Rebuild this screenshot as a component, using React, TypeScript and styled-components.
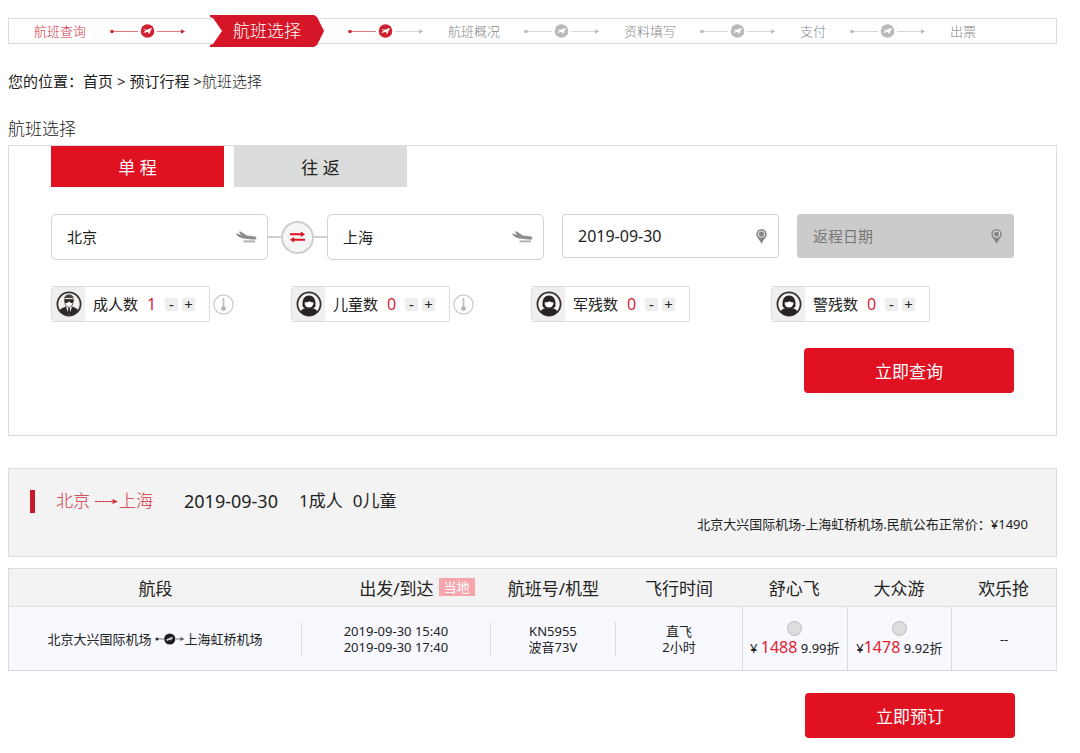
import React, { useState } from "react";
import styled, { createGlobalStyle, css } from "styled-components";

const RED = "#e01222";
const LINE = "#dcdcdc";

const GlobalStyle = createGlobalStyle`
  *, *::before, *::after { box-sizing: border-box; }
  body {
    margin: 0;
    background: #fff;
    color: #222;
    font-family: "Noto Sans", "Noto Sans CJK SC", sans-serif;
    font-size: 15px;
    line-height: 20px;
  }
  button, input { font: inherit; color: inherit; }
  button { cursor: pointer; }
`;

const Page = styled.main`
  padding: 18px 23px 15px 8px;
`;

/* progress bar */

const Steps = styled.ol`
  display: flex;
  align-items: center;
  height: 26px;
  margin: 0;
  padding: 0 0 0 25px;
  border: 1px solid ${LINE};
  list-style: none;
  font-size: 13px;
  font-weight: 300;
  white-space: nowrap;
`;

const Step = styled.li<{ $done?: boolean }>`
  display: flex;
  align-items: center;
  color: ${(p) => (p.$done ? "#d0313f" : "#858585")};
`;

const StepCurrent = styled.span`
  display: grid;
  width: 114px;
  height: 32px;
  align-items: center;
  justify-items: center;
  color: #fff;
  font-size: 17px;
  background: #d51528;
  clip-path: polygon(0 0, 104px 0, 107px 2px, 114px 50%, 107px 30px, 104px 100%, 0 100%, 0 30px, 3px 29px, 12px 50%, 3px 3px, 0 2px);
`;

const StepLine = styled.svg`
  width: 75px;
  height: 14px;
  margin: 0 25px 0 24px;
`;

const Crumbs = styled.nav`
  margin-top: 27px;
  white-space: pre;

  a { color: inherit; text-decoration: none; }
  span { font-weight: 300; }
`;

const SectionTitle = styled.h1`
  margin: 26px 0 4px;
  font-size: 17px;
  font-weight: 300;
  line-height: 24px;
`;

/* search panel */

const SearchPanel = styled.form`
  padding: 0 42px 42px;
  border: 1px solid ${LINE};
`;

const Tabs = styled.div`
  display: flex;
  gap: 10px;
`;

const Tab = styled.button<{ $active?: boolean }>`
  width: 173px;
  height: 41px;
  padding: 2px 0 0;
  border: 0;
  font-size: 17px;
  color: ${(p) => (p.$active ? "#fff" : "#222")};
  background: ${(p) => (p.$active ? RED : "#dbdddc")};
`;

const FieldRow = styled.div`
  display: flex;
  align-items: flex-start;
  margin-top: 27px;
`;

const Field = styled.label<{ $date?: boolean; $muted?: boolean }>`
  display: flex;
  flex: 1;
  min-width: 0;
  align-items: center;
  height: ${(p) => (p.$date ? "44px" : "46px")};
  margin-left: ${(p) => (p.$date ? "18px" : "0")};
  padding: 0 10px 0 15px;
  border: 1px solid #d3d3d3;
  border-radius: ${(p) => (p.$date ? "3px" : "5px")};
  ${(p) =>
    p.$muted &&
    css`
      background: #cbcbcb;
      border-color: #cbcbcb;
    `}
`;

const FieldInput = styled.input<{ $date?: boolean }>`
  flex: 1;
  min-width: 0;
  padding: 0;
  border: 0;
  outline: 0;
  background: none;
  font-size: ${(p) => (p.$date ? "16px" : "15px")};

  &::placeholder { color: #777; opacity: 1; font-size: 15px; }
`;

const SwapSlot = styled.div`
  display: flex;
  width: 59px;
  height: 46px;
  align-items: center;

  &::before, &::after {
    content: "";
    flex: 1;
    height: 2px;
    background: #d0d0d0;
  }
`;

const SwapButton = styled.button`
  display: grid;
  place-items: center;
  width: 33px;
  height: 33px;
  padding: 0;
  border: 2px solid #cfcfcf;
  border-radius: 50%;
  background: #f5f5f5;
`;

const Travellers = styled.div`
  display: grid;
  grid-template-columns: repeat(4, 1fr);
  margin-top: 26px;
  padding-right: 3px;
`;

const Traveller = styled.div`
  display: flex;
  align-items: center;
  gap: 3px;
`;

const CounterBox = styled.div`
  display: flex;
  align-items: center;
  width: 159px;
  height: 36px;
  border: 1px solid ${LINE};
  border-radius: 3px;
  white-space: nowrap;
`;

const AvatarCell = styled.span`
  display: grid;
  place-items: center;
  width: 33px;
  height: 34px;
  margin-right: 8px;
  background: #efefef;
`;

const Count = styled.output`
  width: 27px;
  text-align: center;
  color: #d22736;
  font-size: 16px;
`;

const Nudge = styled.button`
  width: 13px;
  height: 13px;
  margin-right: 4px;
  padding: 0;
  border: 0;
  background: #eee;
  font-size: 15px;
  line-height: 13px;
`;

const ActionRow = styled.div<{ $inset?: boolean }>`
  display: flex;
  justify-content: flex-end;
  margin-top: ${(p) => (p.$inset ? "22px" : "26px")};
  padding-right: ${(p) => (p.$inset ? "42px" : "0")};
`;

const ActionButton = styled.button`
  width: 210px;
  height: 45px;
  padding: 2px 0 0;
  border: 0;
  border-radius: 4px;
  background: ${RED};
  color: #fff;
  font-size: 17px;
`;

/* results */

const Summary = styled.section`
  margin-top: 32px;
  padding: 20px 28px 22px 21px;
  border: 1px solid ${LINE};
  background: #f3f3f3;
`;

const SummaryMain = styled.div`
  display: flex;
  align-items: center;
  height: 24px;
  font-size: 17px;
`;

const Marker = styled.span`
  width: 5px;
  height: 23px;
  margin-right: 21px;
  background: #c8182a;
`;

const Route = styled.h2`
  display: flex;
  align-items: center;
  margin: 0 31px 0 0;
  color: #d0313f;
  font-size: 17px;
  font-weight: 300;

  svg { margin-left: 4px; }
`;

const TravelDate = styled.span`
  margin-right: 21px;
  font-size: 18px;
`;

const Party = styled.span`
  margin-right: 10px;
`;

const ListPrice = styled.p`
  margin: 1px 0 0;
  font-size: 13px;
  text-align: right;
`;

const Flights = styled.table`
  width: 100%;
  margin-top: 11px;
  table-layout: fixed;
  border: 1px solid ${LINE};
  border-spacing: 0;
  text-align: center;
  white-space: nowrap;
`;

const HeadCell = styled.th<{ $w: number }>`
  width: ${(p) => p.$w}%;
  height: 38px;
  padding: 2px 0 0;
  border-bottom: 1px solid ${LINE};
  background: #f3f3f3;
  font-size: 17px;
  font-weight: 400;
`;

const HeadLabel = styled.span`
  position: relative;
`;

const LocalTag = styled.span`
  position: absolute;
  left: calc(100% + 5px);
  top: 50%;
  width: 36px;
  height: 18px;
  margin-top: -10px;
  background: #f5a5ab;
  color: #fff;
  font-size: 13px;
  line-height: 18px;
`;

const Cell = styled.td<{ $fare?: boolean }>`
  height: 63px;
  padding: 0;
  background: #f8f9ff;
  font-size: 13px;
  line-height: 16px;
  ${(p) => p.$fare && `border-left: 1px solid ${LINE};`}
`;

const CellBody = styled.div<{ $divided?: boolean }>`
  display: flex;
  flex-direction: column;
  justify-content: center;
  height: 34px;
  border-right: ${(p) => (p.$divided ? `1px solid ${LINE}` : "0")};
`;

const Segment = styled.span`
  display: flex;
  align-items: center;
  justify-content: center;

  svg { margin-left: 3px; }
`;

const Fare = styled.label`
  display: flex;
  flex-direction: column;
  align-items: center;
  gap: 3px;
`;

const FareRadio = styled.input`
  appearance: none;
  width: 15px;
  height: 15px;
  margin: 0;
  border: 1px solid #bbb;
  border-radius: 50%;
  background: #dedede;

  &:checked { background: ${RED}; }
`;

const Amount = styled.b`
  color: #e0222f;
  font-size: 16px;
  font-weight: 400;
`;

/* drawings */

function Connector({ from, plane, to }: { from: string; plane: string; to: string }) {
  return (
    <StepLine viewBox="0 0 75 14" aria-hidden="true">
      <path d="M2 7.5H28" stroke={from} strokeOpacity="0.6" />
      <path d="M47 7.5H71" stroke={to} strokeOpacity="0.6" />
      <circle cx="2" cy="7.5" r="1.8" fill={from} />
      <path d="M71 5.2L75 7.5L71 9.8Z" fill={to} />
      <circle cx="37.5" cy="7" r="6.8" fill={plane} />
      <path
        d="M33 5.2L37 5.8L40.8 4.3L42.2 4.6L40.6 6.6L39.8 9.4L38.4 9.6L38.2 7.8L34.6 8.8L33.2 8.2L36 6.8Z"
        fill="#fff"
      />
    </StepLine>
  );
}

function PlaneIcon() {
  return (
    <svg width="22" height="13" viewBox="0 0 22 13" aria-hidden="true">
      <path
        d="M.5 2.2L3 3L6.3 3.8L3.6 .8L5.6 .4L12 4.6L18.5 5.2C20.6 5.5 21.6 6.4 21.4 7.4C21.2 8.4 19.4 8.7 17.2 8.5L8 7.4C5 6.8 2.4 5.2 .5 2.2Z"
        fill="#8d8d8d"
      />
      <path d="M8.5 10.4H20" stroke="#b3b3b3" strokeWidth="2" />
    </svg>
  );
}

function PinIcon() {
  return (
    <svg width="13" height="17" viewBox="0 0 13 17" aria-hidden="true">
      <path
        d="M6.5 1A5.2 5.2 0 0 0 1.3 6.2C1.3 8.2 3 10.2 4.3 12L6.5 15.8L8.7 12C10 10.2 11.7 8.2 11.7 6.2A5.2 5.2 0 0 0 6.5 1Z"
        fill="#858585"
      />
      <circle cx="6.5" cy="6.1" r="3.1" fill="none" stroke="#ddd" strokeWidth="1.1" />
    </svg>
  );
}

function SwapIcon() {
  return (
    <svg width="17" height="14" viewBox="0 0 17 14" fill={RED} aria-hidden="true">
      <path d="M1 3.2H12V1.4L16 4.2L12 7V5.2H1Z" />
      <path d="M16 8.8H5V7L1 9.8L5 12.6V10.8H16Z" />
    </svg>
  );
}

function Avatar({ adult }: { adult?: boolean }) {
  return (
    <svg width="26" height="26" viewBox="0 0 26 26" aria-hidden="true">
      <circle cx="13" cy="13" r="11.6" fill="#f4f2f1" stroke="#3a3230" strokeWidth="1.8" />
      {adult ? (
        <>
          <path d="M3.6 19.5C5 17 7.4 16.4 9.8 15.4H16.2C18.6 16.4 21 17 22.4 19.5A11.6 11.6 0 0 1 3.6 19.5Z" fill="#2f2826" />
          <path d="M10 15.6L13 24.4L16 15.6Z" fill="#fff" />
          <path d="M12 17H14L13.8 18.6L14.4 22L13 24.2L11.6 22L12.2 18.6Z" fill="#2f2826" />
          <path d="M9 8.4H17V11.4C17 14 15.2 16.2 13 16.2S9 14 9 11.4Z" fill="#fff" stroke="#4a4240" strokeWidth="0.9" />
          <path d="M8.4 8.6C8 4.8 10.2 3.4 13 3.4S18 4.8 17.6 8.6L16.6 7H9.4Z" fill="#4a4240" />
          <path d="M8.4 8.6H17.6V10.2C17.2 12.4 14.2 12.4 13.4 10.4H12.6C11.8 12.4 8.8 12.4 8.4 10.2Z" fill="#2f2826" />
        </>
      ) : (
        <>
          <path d="M4.4 20.8C6 17.8 9 17.4 10.6 16.8H15.4C17 17.4 20 17.8 21.6 20.8A11.6 11.6 0 0 1 4.4 20.8Z" fill="#2a2220" />
          <path d="M6.6 15.6C6 8.4 8 4.4 13 4.4S20 8.4 19.4 15.6L17 17.6H9Z" fill="#2a2220" />
          <path d="M8.6 11.4C11 11.4 12.4 11 13.6 10.2C14.6 11 15.8 11.4 17.4 11.4C17.4 14.6 15.8 16.6 13 16.6S8.6 14.6 8.6 11.4Z" fill="#fff" />
        </>
      )}
    </svg>
  );
}

function HintIcon() {
  return (
    <svg width="21" height="21" viewBox="0 0 21 21" role="img" aria-label="说明">
      <circle cx="10.5" cy="10.5" r="9.6" fill="#fff" stroke="#cbcbcb" strokeWidth="1.2" />
      <path d="M10.5 3.8V13" stroke="#bdbdbd" strokeWidth="1.6" />
      <circle cx="10.5" cy="14.6" r="2.4" fill="#b5b5b5" />
    </svg>
  );
}

function RouteArrow() {
  return (
    <svg width="25" height="8" viewBox="0 0 25 8" aria-hidden="true">
      <path d="M1 4.5H20" stroke="#d0313f" strokeDasharray="3 0.5" />
      <path d="M18.5 2L24 4.5L18.5 7Z" fill="#d0313f" />
    </svg>
  );
}

function SegmentArrow() {
  return (
    <svg width="30" height="12" viewBox="0 0 30 12" aria-hidden="true">
      <path d="M2 6H9M21 6H27" stroke="#777" />
      <circle cx="2" cy="6" r="1.6" fill="#333" />
      <path d="M25.5 4L29.5 6L25.5 8Z" fill="#555" />
      <circle cx="14.8" cy="6" r="5.6" fill="#1d1d1d" />
      <path d="M11.2 6.6L15 4.6L18.2 4L17.4 5.4L15.8 7.4L14.8 6.8L12 8Z" fill="#ccc" />
    </svg>
  );
}

/* data */

const GREY = "#b9b9b9";
const STEP_RED = "#cf2231";

const steps = [
  { name: "航班查询", done: true, line: [STEP_RED, STEP_RED, STEP_RED] },
  { name: "航班选择", current: true, line: [STEP_RED, STEP_RED, GREY] },
  { name: "航班概况", line: [GREY, GREY, GREY] },
  { name: "资料填写", line: [GREY, GREY, GREY] },
  { name: "支付", line: [GREY, GREY, GREY] },
  { name: "出票" },
];

const travellerKinds = [
  { name: "成人数", start: 1, adult: true, hint: true },
  { name: "儿童数", start: 0, hint: true },
  { name: "军残数", start: 0 },
  { name: "警残数", start: 0 },
];

const columns = [
  { name: "航段", width: 28 },
  { name: "出发/到达", width: 18, local: true },
  { name: "航班号/机型", width: 12 },
  { name: "飞行时间", width: 12 },
  { name: "舒心飞", width: 10 },
  { name: "大众游", width: 10 },
  { name: "欢乐抢", width: 10 },
];

const fares = [
  { sign: "¥ ", amount: 1488, discount: "9.99折" },
  { sign: "¥", amount: 1478, discount: "9.92折" },
];

function Counter({ name, start, adult, hint }: { name: string; start: number; adult?: boolean; hint?: boolean }) {
  const [count, setCount] = useState(start);
  return (
    <Traveller>
      <CounterBox role="group" aria-label={name}>
        <AvatarCell>
          <Avatar adult={adult} />
        </AvatarCell>
        {name}
        <Count>{count}</Count>
        <Nudge type="button" aria-label="减少" onClick={() => setCount(Math.max(0, count - 1))}>-</Nudge>
        <Nudge type="button" aria-label="增加" onClick={() => setCount(count + 1)}>+</Nudge>
      </CounterBox>
      {hint && <HintIcon />}
    </Traveller>
  );
}

export default function App() {
  const [from, setFrom] = useState("北京");
  const [to, setTo] = useState("上海");
  const [oneWay, setOneWay] = useState(true);

  const swap = () => {
    setFrom(to);
    setTo(from);
  };

  return (
    <>
      <GlobalStyle />
      <Page lang="zh-CN">
        <Steps>
          {steps.map((s) => (
            <Step key={s.name} $done={s.done} aria-current={s.current ? "step" : undefined}>
              {s.current ? <StepCurrent>{s.name}</StepCurrent> : s.name}
              {s.line && <Connector from={s.line[0]} plane={s.line[1]} to={s.line[2]} />}
            </Step>
          ))}
        </Steps>

        <Crumbs aria-label="您的位置">
          您的位置：<a href="#home">首页</a> {">"} <a href="#booking">预订行程</a> {">"}
          <span>航班选择</span>
        </Crumbs>

        <SectionTitle>航班选择</SectionTitle>

        <SearchPanel onSubmit={(e) => e.preventDefault()}>
          <Tabs>
            <Tab type="button" $active={oneWay} onClick={() => setOneWay(true)}>单 程</Tab>
            <Tab type="button" $active={!oneWay} onClick={() => setOneWay(false)}>往 返</Tab>
          </Tabs>

          <FieldRow>
            <Field>
              <FieldInput aria-label="出发城市" value={from} onChange={(e) => setFrom(e.target.value)} />
              <PlaneIcon />
            </Field>
            <SwapSlot>
              <SwapButton type="button" aria-label="交换城市" onClick={swap}>
                <SwapIcon />
              </SwapButton>
            </SwapSlot>
            <Field>
              <FieldInput aria-label="到达城市" value={to} onChange={(e) => setTo(e.target.value)} />
              <PlaneIcon />
            </Field>
            <Field $date>
              <FieldInput $date aria-label="出发日期" defaultValue="2019-09-30" />
              <PinIcon />
            </Field>
            <Field $date $muted={oneWay}>
              <FieldInput $date aria-label="返程日期" placeholder="返程日期" disabled={oneWay} />
              <PinIcon />
            </Field>
          </FieldRow>

          <Travellers>
            {travellerKinds.map((t) => (
              <Counter key={t.name} {...t} />
            ))}
          </Travellers>

          <ActionRow>
            <ActionButton type="submit">立即查询</ActionButton>
          </ActionRow>
        </SearchPanel>

        <Summary>
          <SummaryMain>
            <Marker />
            <Route>
              北京
              <RouteArrow />
              上海
            </Route>
            <TravelDate>2019-09-30</TravelDate>
            <Party>1成人</Party>
            <Party>0儿童</Party>
          </SummaryMain>
          <ListPrice>北京大兴国际机场-上海虹桥机场.民航公布正常价：¥1490</ListPrice>
        </Summary>

        <Flights>
          <thead>
            <tr>
              {columns.map((c) => (
                <HeadCell key={c.name} $w={c.width} scope="col">
                  <HeadLabel>
                    {c.name}
                    {c.local && <LocalTag>当地</LocalTag>}
                  </HeadLabel>
                </HeadCell>
              ))}
            </tr>
          </thead>
          <tbody>
            <tr>
              <Cell>
                <CellBody $divided>
                  <Segment>
                    北京大兴国际机场
                    <SegmentArrow />
                    上海虹桥机场
                  </Segment>
                </CellBody>
              </Cell>
              <Cell>
                <CellBody $divided>
                  <span>2019-09-30 15:40</span>
                  <span>2019-09-30 17:40</span>
                </CellBody>
              </Cell>
              <Cell>
                <CellBody $divided>
                  <span>KN5955</span>
                  <span>波音73V</span>
                </CellBody>
              </Cell>
              <Cell>
                <CellBody>
                  <span>直飞</span>
                  <span>2小时</span>
                </CellBody>
              </Cell>
              {fares.map((f) => (
                <Cell key={f.amount} $fare>
                  <Fare>
                    <FareRadio type="radio" name="fare" value={f.amount} />
                    <span>
                      {f.sign}
                      <Amount>{f.amount}</Amount> {f.discount}
                    </span>
                  </Fare>
                </Cell>
              ))}
              <Cell $fare>--</Cell>
            </tr>
          </tbody>
        </Flights>

        <ActionRow $inset>
          <ActionButton type="button">立即预订</ActionButton>
        </ActionRow>
      </Page>
    </>
  );
}
